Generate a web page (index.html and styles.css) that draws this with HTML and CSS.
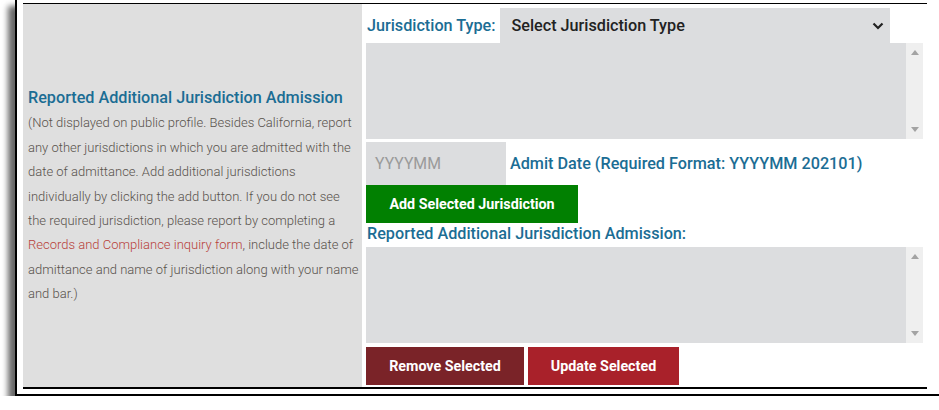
FILE: index.html
```html
<!DOCTYPE html>
<html>
<head>
<meta charset="utf-8">
<link rel="stylesheet" href="styles.css">
</head>
<body>
<div class="frame">
  <div class="table">
    <div class="info">
      <div class="info-inner">
        <div class="heading">Reported Additional Jurisdiction Admission</div>
        <p class="desc">(Not displayed on public profile. Besides California, report<br>any other jurisdictions in which you are admitted with the<br>date of admittance. Add additional jurisdictions<br>individually by clicking the add button. If you do not see<br>the required jurisdiction, please report by completing a<br><a class="link" href="#">Records and Compliance inquiry form</a>, include the date of<br>admittance and name of jurisdiction along with your name<br>and bar.)</p>
      </div>
    </div>
    <div class="form">
      <div class="row-type">
        <span class="label">Jurisdiction Type:</span>
        <div class="select">
          <span>Select Jurisdiction Type</span>
          <svg class="chev" width="12" height="8" viewBox="0 0 12 8"><path d="M1.5 1.5 L6 6 L10.5 1.5" fill="none" stroke="#222" stroke-width="2.2"/></svg>
        </div>
      </div>
      <div class="listbox">
        <div class="lb-area"></div>
        <div class="scroll">
          <svg width="8" height="5" viewBox="0 0 8 5"><path d="M0 5 L4 0 L8 5Z" fill="#a3a3a3"/></svg>
          <svg width="8" height="5" viewBox="0 0 8 5"><path d="M0 0 L4 5 L8 0Z" fill="#a3a3a3"/></svg>
        </div>
      </div>
      <div class="row-date">
        <div class="input">YYYYMM</div>
        <span class="label">Admit Date (Required Format: YYYYMM 202101)</span>
      </div>
      <button class="btn btn-green">Add Selected Jurisdiction</button>
      <div class="label label-list">Reported Additional Jurisdiction Admission:</div>
      <div class="listbox">
        <div class="lb-area"></div>
        <div class="scroll">
          <svg width="8" height="5" viewBox="0 0 8 5"><path d="M0 5 L4 0 L8 5Z" fill="#a3a3a3"/></svg>
          <svg width="8" height="5" viewBox="0 0 8 5"><path d="M0 0 L4 5 L8 0Z" fill="#a3a3a3"/></svg>
        </div>
      </div>
      <div class="row-btns">
        <button class="btn btn-remove">Remove Selected</button>
        <button class="btn btn-update">Update Selected</button>
      </div>
    </div>
  </div>
</div>
</body>
</html>
```

FILE: styles.css
```css
html, body {
  margin: 0;
  padding: 0;
  background: #fff;
  font-family: Roboto, "Liberation Sans", sans-serif;
}
.frame {
  margin-left: 15px;
  margin-top: -1px;
  width: 922px;
  border: 1px solid #000;
  border-width: 1px 1px 2px 2px;
  padding: 3px 10px 5px 6px;
  box-shadow: -7px 7px 6px rgba(0,0,0,0.6);
  background: #fff;
}
.table {
  display: grid;
  grid-template-columns: 339px 557px;
  column-gap: 4px;
  border-top: 1px solid #000;
  border-bottom: 2px solid #000;
  width: 904px;
}
.info {
  background: #dfdfdf;
  display: flex;
  align-items: center;
  padding: 0 0 0 5px;
  overflow: hidden;
}
.info-inner {
  padding-top: 4px;
}
.heading {
  color: #1b6d94;
  font-size: 16.2px;
  font-weight: 500;
  line-height: 20px;
}
.desc {
  margin: 3px 0 0;
  color: #58524c;
  font-size: 13px;
  font-weight: 300;
  line-height: 24.4px;
  white-space: nowrap;
}
.link {
  color: #b8413a;
  text-decoration: none;
}
.form {
  display: flex;
  flex-direction: column;
  align-items: flex-start;
  padding: 4px 0 2px;
}
.label {
  color: #1b6d94;
  font-size: 16.2px;
  font-weight: 500;
}
.row-type {
  display: flex;
  align-items: center;
  gap: 5px;
  padding-left: 1px;
  height: 35px;
}
.select {
  width: 390px;
  height: 35px;
  background: #dcdddf;
  display: flex;
  align-items: center;
  justify-content: space-between;
  padding: 0 6px 0 11px;
  box-sizing: border-box;
  font-size: 16.2px;
  font-weight: 500;
  color: #222;
}
.listbox {
  display: flex;
  width: 557px;
  height: 96px;
  background: #dcdddf;
}
.lb-area {
  flex: 1;
}
.scroll {
  width: 17px;
  background: #efefef;
  display: flex;
  flex-direction: column;
  align-items: center;
  justify-content: space-between;
  padding: 7px 0 7px;
  box-sizing: border-box;
}
.row-date {
  display: flex;
  align-items: center;
  gap: 4px;
  margin-top: 3px;
}
.input {
  width: 140px;
  height: 43px;
  background: #dcdddf;
  box-sizing: border-box;
  padding-left: 9px;
  display: flex;
  align-items: center;
  color: #9a9a9a;
  font-size: 15.8px;
}
.btn {
  border: 0;
  margin: 0;
  font-family: Roboto, "Liberation Sans", sans-serif;
  font-size: 14.3px;
  font-weight: 700;
  color: #fff;
  height: 38px;
  padding: 0;
  cursor: pointer;
}
.btn-green {
  background: #018001;
  width: 212px;
}
.label-list {
  margin: 2px 0 4px 1px;
  line-height: 18px;
}
.row-btns {
  display: flex;
  gap: 4px;
  margin-top: 4px;
}
.btn-remove {
  background: #7a2328;
  width: 158px;
}
.btn-update {
  background: #a9212a;
  width: 151px;
}
```
